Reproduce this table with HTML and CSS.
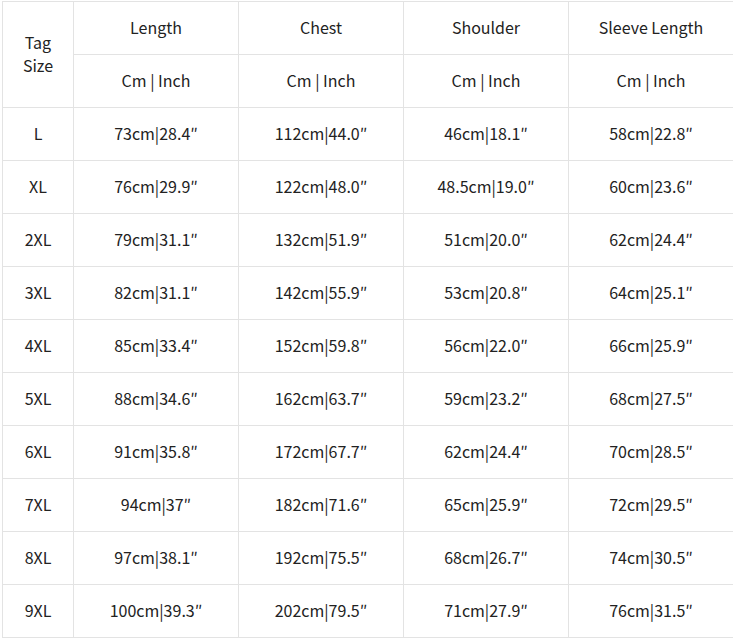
FILE: index.html
```html
<!DOCTYPE html>
<html>
<head>
<meta charset="utf-8">
<link rel="stylesheet" href="styles.css">
</head>
<body>
<table class="size-table">
  <colgroup>
    <col class="col-tag">
    <col class="col-data">
    <col class="col-data">
    <col class="col-data">
    <col class="col-data">
  </colgroup>
  <tr>
    <td rowspan="2" class="tag-head">Tag<br>Size</td>
    <td>Length</td>
    <td>Chest</td>
    <td>Shoulder</td>
    <td>Sleeve Length</td>
  </tr>
  <tr>
    <td>Cm | Inch</td>
    <td>Cm | Inch</td>
    <td>Cm | Inch</td>
    <td>Cm | Inch</td>
  </tr>
  <tr><td>L</td><td>73cm|28.4″</td><td>112cm|44.0″</td><td>46cm|18.1″</td><td>58cm|22.8″</td></tr>
  <tr><td>XL</td><td>76cm|29.9″</td><td>122cm|48.0″</td><td>48.5cm|19.0″</td><td>60cm|23.6″</td></tr>
  <tr><td>2XL</td><td>79cm|31.1″</td><td>132cm|51.9″</td><td>51cm|20.0″</td><td>62cm|24.4″</td></tr>
  <tr><td>3XL</td><td>82cm|31.1″</td><td>142cm|55.9″</td><td>53cm|20.8″</td><td>64cm|25.1″</td></tr>
  <tr><td>4XL</td><td>85cm|33.4″</td><td>152cm|59.8″</td><td>56cm|22.0″</td><td>66cm|25.9″</td></tr>
  <tr><td>5XL</td><td>88cm|34.6″</td><td>162cm|63.7″</td><td>59cm|23.2″</td><td>68cm|27.5″</td></tr>
  <tr><td>6XL</td><td>91cm|35.8″</td><td>172cm|67.7″</td><td>62cm|24.4″</td><td>70cm|28.5″</td></tr>
  <tr><td>7XL</td><td>94cm|37″</td><td>182cm|71.6″</td><td>65cm|25.9″</td><td>72cm|29.5″</td></tr>
  <tr><td>8XL</td><td>97cm|38.1″</td><td>192cm|75.5″</td><td>68cm|26.7″</td><td>74cm|30.5″</td></tr>
  <tr><td>9XL</td><td>100cm|39.3″</td><td>202cm|79.5″</td><td>71cm|27.9″</td><td>76cm|31.5″</td></tr>
</table>
</body>
</html>
```

FILE: styles.css
```css
html, body {
  margin: 0;
  padding: 0;
  background: #ffffff;
}
body {
  padding: 1px 0 0 2px;
  font-family: "Noto Sans CJK SC", "Open Sans", sans-serif;
  font-size: 16px;
  color: #222222;
}
.size-table {
  border-collapse: collapse;
  table-layout: fixed;
  width: 732px;
}
.col-tag { width: 71px; }
.col-data { width: 165px; }
.size-table td {
  border: 1px solid #e3e3e3;
  height: 51px;
  padding: 0 0 1px 0;
  text-align: center;
  vertical-align: middle;
  line-height: 23px;
}
```
